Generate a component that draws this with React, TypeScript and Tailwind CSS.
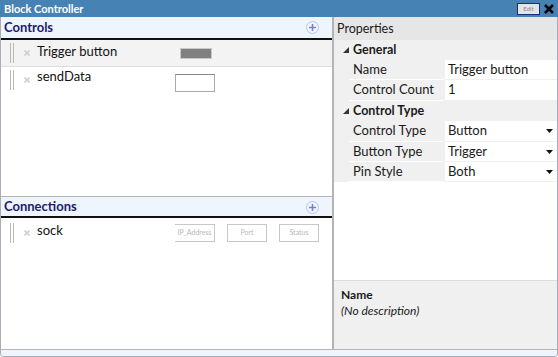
import React from "react";

const font = { fontFamily: "Lato, 'Open Sans', sans-serif" };

function Grip() {
  return (
    <div className="flex gap-[2px] h-[20px] ml-[9px]">
      <div className="w-[1px] h-full bg-[#b8b8b8]" />
      <div className="w-[1px] h-full bg-[#b8b8b8]" />
    </div>
  );
}

function XIcon() {
  return (
    <svg width="6" height="6" viewBox="0 0 6 6" className="ml-[10px]">
      <path d="M0.5 0.5 L5.5 5.5 M5.5 0.5 L0.5 5.5" stroke="#d0d0d0" strokeWidth="1.6" />
    </svg>
  );
}

function PlusIcon() {
  return (
    <svg width="13" height="13" viewBox="0 0 13 13" className="mr-[10px]">
      <circle cx="6.5" cy="6.5" r="6" fill="#f4f6fd" stroke="#b8c2e8" strokeWidth="1" />
      <path d="M6.5 3 V10 M3 6.5 H10" stroke="#7083d9" strokeWidth="1.6" />
    </svg>
  );
}

function Arrow() {
  return (
    <svg width="7" height="4" viewBox="0 0 7 4">
      <path d="M0 0 H7 L3.5 4 Z" fill="#111" />
    </svg>
  );
}

function CatTri() {
  return (
    <svg width="6" height="6" viewBox="0 0 6 6">
      <path d="M6 0 V6 H0 Z" fill="#333" />
    </svg>
  );
}

function PropRow({ name, value, dd, h = 20 }: { name: string; value: string; dd?: boolean; h?: number }) {
  return (
    <div className={`flex text-[13px] text-[#1a1a1a] ${h === 21 ? "h-[21px]" : "h-[20px]"}`}>
      <div className="w-[15px] bg-[#f0f0f0]" />
      <div className="w-[95px] bg-[#f0f0f0] border-b border-white flex items-center pl-[4px]">{name}</div>
      <div className="flex-1 bg-white border-b border-[#f0f0f0] border-l border-l-[#f0f0f0] flex items-center pl-[3px] pr-[4px] justify-between">
        <span>{value}</span>
        {dd && <Arrow />}
      </div>
    </div>
  );
}

function CatRow({ name }: { name: string }) {
  return (
    <div className="flex h-[20px] items-center bg-[#f0f0f0] text-[12.5px] font-bold text-[#1a1a1a]">
      <div className="w-[19px] flex justify-center pl-[4px]">
        <CatTri />
      </div>
      <span>{name}</span>
    </div>
  );
}

export default function App() {
  return (
    <div className="w-[558px] h-[357px] bg-white overflow-hidden flex flex-col" style={font}>
      <div className="h-[17px] bg-[#4682b4] flex items-center justify-between pl-[4px] pr-[4px]">
        <span className="text-white font-bold text-[11px] leading-none">Block Controller</span>
        <div className="flex items-center gap-[4px]">
          <div className="w-[23px] h-[12px] bg-[#e2e4ec] border border-[#1f2a7a] flex items-center justify-center text-[6px] text-[#888] leading-none">
            Edit
          </div>
          <svg width="10" height="10" viewBox="0 0 10 10">
            <path d="M1 1 L9 9 M9 1 L1 9" stroke="#000" strokeWidth="2.6" />
          </svg>
        </div>
      </div>
      <div className="flex-1 flex flex-col border-x border-b border-[#a8aeb8] rounded-b-[4px] overflow-hidden">
        <div className="flex-1 flex">
          {/* Left panel */}
          <div className="w-[333px] flex flex-col border-r-2 border-[#b4b4b4]">
            <div className="h-[180px] flex flex-col border-b border-[#b4b4b4]">
              <div className="h-[23px] bg-[#eef5fc] flex items-center justify-between px-[3px] border-b-2 border-[#111]">
                <span className="text-[13px] font-bold text-[#1e1a6e]">Controls</span>
                <PlusIcon />
              </div>
              <div className="flex h-[27px] items-center bg-[#f3f3f3] border-b border-[#dedede] text-[13px] text-[#111]">
                <Grip />
                <XIcon />
                <span className="ml-[7px] w-[143px] -mt-[3px]">Trigger button</span>
                <div className="w-[30px] h-[9px] bg-[#808080] border border-[#c8c8c8] box-content" />
              </div>
              <div className="flex h-[26px] items-center text-[13px] text-[#111]">
                <Grip />
                <XIcon />
                <span className="ml-[7px] w-[138px] -mt-[6px]">sendData</span>
                <div className="w-[40px] h-[18px] mt-[6px] border border-[#aaa] border-t-[#888]" />
              </div>
            </div>
            <div className="flex-1 flex flex-col">
              <div className="h-[21px] bg-[#eef5fc] flex items-center justify-between px-[3px] pt-[1px] border-b-2 border-[#111]">
                <span className="text-[13px] font-bold text-[#1e1a6e]">Connections</span>
                <PlusIcon />
              </div>
              <div className="flex h-[22px] items-center text-[13px] text-[#111] mt-[4px]">
                <Grip />
                <XIcon />
                <span className="ml-[7px] w-[138px] -mt-[4px]">sock</span>
                <div className="flex gap-[12px] text-[7px] text-[#b8b8b8]">
                  <div className="w-[40px] h-[18px] border-y border-r border-[#c8c8c8] flex items-start justify-center pt-[2px] overflow-hidden">
                    IP_Address
                  </div>
                  <div className="w-[40px] h-[18px] border border-[#c8c8c8] flex items-start justify-center pt-[2px]">Port</div>
                  <div className="w-[40px] h-[18px] border border-[#c8c8c8] flex items-start justify-center pt-[2px]">Status</div>
                </div>
              </div>
            </div>
          </div>
          {/* Right panel */}
          <div className="flex-1 flex flex-col">
            <div className="h-[23px] bg-[#e6e6e6] flex items-center pl-[3px] pt-[1px] text-[12.5px] text-[#1a1a1a]">Properties</div>
            <div className="flex-1 flex flex-col bg-white">
              <CatRow name="General" />
              <PropRow name="Name" value="Trigger button" />
              <PropRow name="Control Count" value="1" h={21} />
              <CatRow name="Control Type" />
              <PropRow name="Control Type" value="Button" dd h={21} />
              <PropRow name="Button Type" value="Trigger" dd />
              <PropRow name="Pin Style" value="Both" dd />
            </div>
            <div className="h-[69px] bg-[#f0f0f0] border-t border-[#dcdcdc] pl-[7px] pt-[6px] text-[12px] text-[#1a1a1a]">
              <div className="font-bold leading-[16px]">Name</div>
              <div className="italic leading-[16px]">(No description)</div>
            </div>
          </div>
        </div>
        <div className="h-[7px] bg-[#eef5fc] border-t border-[#b4b4b4]" />
      </div>
    </div>
  );
}
